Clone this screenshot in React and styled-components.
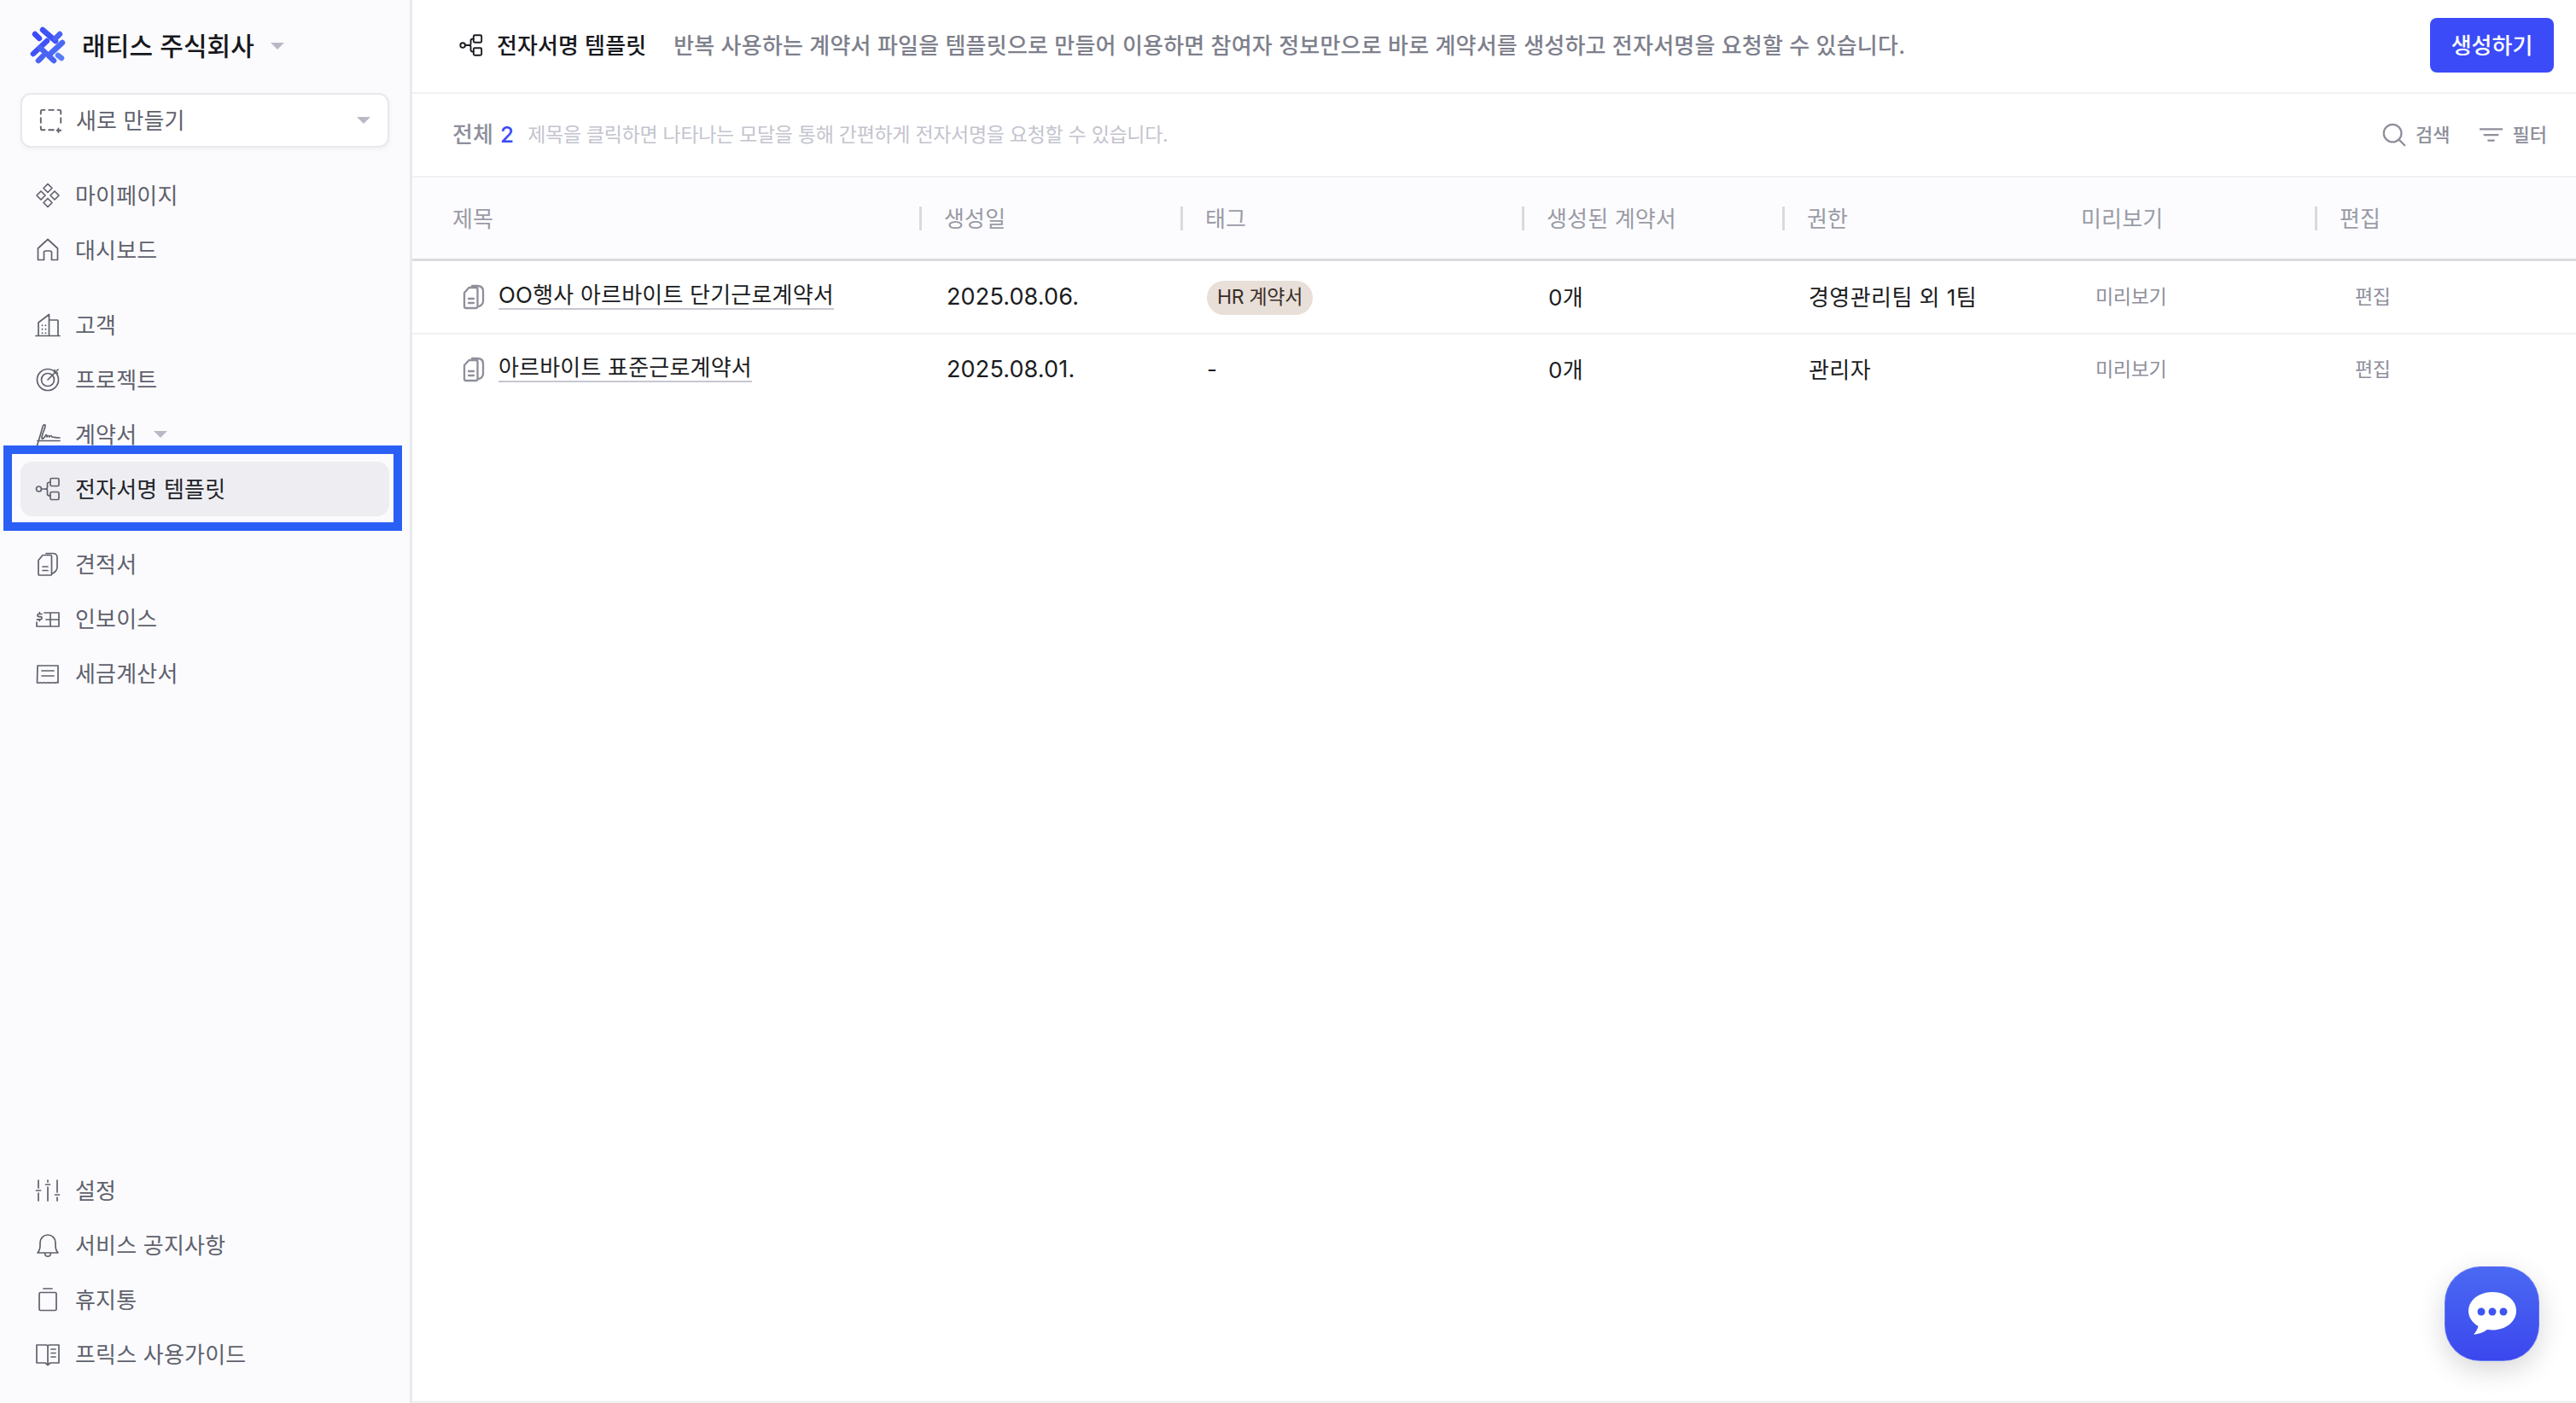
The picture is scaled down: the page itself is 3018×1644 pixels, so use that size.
import React from "react";
import styled, { createGlobalStyle } from "styled-components";

const Global = createGlobalStyle`
  html, body { margin: 0; padding: 0; background: #fff; overflow: hidden; }
  body { font-family: Inter, "Noto Sans CJK KR", sans-serif; color: #1b1c22; }
  * { box-sizing: border-box; }
`;

const Page = styled.div`
  position: relative;
  display: flex;
  width: 3018px;
  height: 1644px;
  overflow: hidden;
`;

const Sidebar = styled.aside`
  width: 483px;
  flex: none;
  height: 100%;
  display: flex;
  flex-direction: column;
  background: #fbfbfd;
  border-right: 3px solid #e9e9ef;
  padding-bottom: 25px;
`;

const Brand = styled.div`
  height: 109px;
  display: flex;
  align-items: center;
  padding: 0 0 2px 30px;
  flex: none;
`;

const BrandName = styled.span`
  margin-left: 14px;
  padding-bottom: 3px;
  font-size: 30px;
  font-weight: 500;
  letter-spacing: 0.1px;
  color: #17181d;
`;

const Caret = styled.i`
  display: block;
  flex: none;
  width: 0;
  height: 0;
  border-left: 8px solid transparent;
  border-right: 8px solid transparent;
  border-top: 8px solid #b9b9c6;
  margin-left: ${(p) => p.$gap || 0}px;
`;

const NewButton = styled.div`
  height: 64px;
  margin: 0 24px 24px;
  display: flex;
  align-items: center;
  padding: 0 20px 0 19px;
  background: #fff;
  border: 2px solid #e8e8ee;
  border-radius: 12px;
  box-shadow: 0 2px 6px rgba(30, 30, 60, 0.05);
  flex: none;
`;

const NewLabel = styled.span`
  flex: 1;
  margin-left: 14px;
  padding-bottom: 3px;
  font-size: 26px;
  letter-spacing: 0.1px;
  color: #5f616d;
`;

const NavGroup = styled.nav`
  display: flex;
  flex-direction: column;
  margin-bottom: ${(p) => p.$gap ?? 24}px;
  margin-top: ${(p) => (p.$bottom ? "auto" : "0")};
`;

const NavItem = styled.div`
  height: 64px;
  margin: 0 24px;
  padding-left: 16px;
  display: flex;
  align-items: center;
  border-radius: 14px;
  background: ${(p) => (p.$active ? "#eeeef2" : "transparent")};
  color: ${(p) => (p.$active ? "#22232a" : "#5f616d")};
  font-size: 26px;
  letter-spacing: 0.2px;
`;

const NavLabel = styled.span`
  margin-left: 16px;
  padding-bottom: 3px;
`;

const Highlight = styled.div`
  position: absolute;
  left: 4px;
  top: 522px;
  width: 467px;
  height: 100px;
  border: 10px solid #2a5ff5;
  pointer-events: none;
`;

const Main = styled.main`
  flex: 1;
  min-width: 0;
  display: flex;
  flex-direction: column;
  background: #fff;
  border-bottom: 2px solid #eeeef2;
`;

const Header = styled.header`
  height: 110px;
  flex: none;
  display: flex;
  align-items: center;
  padding: 0 26px 2px 54px;
  border-bottom: 2px solid #f1f1f3;
`;

const HeaderTitle = styled.h1`
  margin: 0 0 0 15px;
  padding-bottom: 3px;
  font-size: 26px;
  font-weight: 500;
  color: #17181d;
  letter-spacing: 0.1px;
`;

const HeaderDesc = styled.p`
  flex: 1;
  margin: 0 0 0 32px;
  padding-bottom: 3px;
  font-size: 26px;
  font-weight: 500;
  color: #7e808c;
  letter-spacing: 0.22px;
`;

const PrimaryButton = styled.button`
  width: 145px;
  height: 64px;
  padding: 0 0 3px;
  border: 0;
  border-radius: 8px;
  background: #3b4bf8;
  color: #fff;
  font: 500 26px Inter, "Noto Sans CJK KR", sans-serif;
`;

const SubBar = styled.div`
  height: 98px;
  flex: none;
  display: flex;
  align-items: center;
  padding: 0 34px 0 47px;
  border-bottom: 2px solid #f1f1f3;
`;

const Total = styled.span`
  padding-bottom: 5px;
  font-size: 26px;
  font-weight: 500;
  color: #8e8f9b;
  letter-spacing: 0.1px;
`;

const TotalCount = styled.b`
  font-weight: 500;
  color: #3b4bf8;
  margin-left: 8px;
`;

const Hint = styled.span`
  flex: 1;
  margin-left: 16px;
  padding-bottom: 5px;
  font-size: 23px;
  color: #c3c4ce;
  letter-spacing: -0.3px;
`;

const ToolButton = styled.span`
  display: flex;
  align-items: center;
  gap: 10px;
  margin-left: 33px;
  font-size: 22px;
  font-weight: 500;
  color: #8e8f9b;
`;

const ToolLabel = styled.span`
  padding-bottom: 4px;
`;

const COLS = "594px 306px 400px 305px 321px 303px 1fr";

const HeadRow = styled.div`
  height: 98px;
  flex: none;
  display: grid;
  grid-template-columns: ${COLS};
  align-items: start;
  padding-top: 34px;
  background: #fcfcfe;
  border-bottom: 3px solid #dcdcdf;
`;

const HeadCell = styled.div`
  height: 28px;
  display: flex;
  align-items: center;
  padding-left: ${(p) => (p.$first ? 44 : 26)}px;
  padding-bottom: 3px;
  border-left: ${(p) => (p.$plain ? "none" : "3px solid #d9d9de")};
  margin-left: ${(p) => (p.$plain ? 3 : 0)}px;
  font-size: 26px;
  color: #9a9ba6;
  letter-spacing: 0.15px;
`;

const Row = styled.div`
  height: ${(p) => (p.$last ? 82 : 86)}px;
  flex: none;
  display: grid;
  grid-template-columns: ${COLS};
  align-items: center;
  border-bottom: ${(p) => (p.$last ? "none" : "2px solid #f0f0f2")};
`;

const Cell = styled.div`
  padding-left: ${(p) => p.$pad ?? 31}px;
  padding-bottom: ${(p) => (p.$small ? 5 : 4)}px;
  font-size: ${(p) => (p.$small ? 23 : 26)}px;
  color: ${(p) => (p.$muted ? "#8e8f9b" : "#1b1c22")};
  letter-spacing: ${(p) => (p.$small ? -0.3 : 0.45)}px;
`;

const DateCell = styled(Cell)`
  padding-left: 32px;
  padding-bottom: 2px;
  font-size: 27px;
  letter-spacing: 0.14px;
`;

const TagCell = styled(Cell)`
  padding-bottom: 0;
  line-height: 40px;
`;

const TitleCell = styled.div`
  display: flex;
  align-items: center;
  padding-left: 56px;
`;

const TitleLink = styled.span`
  margin-left: 13px;
  font-size: 26px;
  letter-spacing: 0.2px;
  color: #1b1c22;
  border-bottom: 2px solid #c6c7d1;
  line-height: 30px;
  margin-bottom: 2px;
`;

const Tag = styled.span`
  display: inline-flex;
  align-items: center;
  height: 40px;
  padding: 0 12px 2px;
  border-radius: 20px;
  background: #e8dfd9;
  color: #3a2e28;
  font-size: 23px;
  letter-spacing: -0.3px;
`;

const ChatFab = styled.div`
  position: absolute;
  left: 2864px;
  top: 1484px;
  width: 111px;
  height: 111px;
  border-radius: 42px;
  display: flex;
  align-items: center;
  justify-content: center;
  background: linear-gradient(180deg, #4a69f2, #3b47ee);
  border: 1.5px solid rgba(255, 255, 255, 0.16);
  box-shadow: 0 10px 32px rgba(0, 0, 0, 0.16);
`;

const Svg = styled.svg`
  display: block;
  flex: none;
  fill: none;
  stroke: ${(p) => p.$color || "#5f616d"};
  stroke-width: ${(p) => p.$sw || 1.7};
  stroke-linecap: round;
  stroke-linejoin: round;
`;

const Ico = ({ size = 32, color, sw, children }) => (
  <Svg width={size} height={size} viewBox="0 0 32 32" $color={color} $sw={sw}>
    {children}
  </Svg>
);

const icons = {
  my: <><path d="M16 2.500l5 5-5 5-5-5zM8 11l5 5-5 5-5-5zM24 11l5 5-5 5-5-5zM16 19.500l5 5-5 5-5-5z" /></>,
  home: <><path d="M4.500 27.500V14L16 3.500 27.500 14v13.500h-7V19a2 2 0 0 0-2-2h-5a2 2 0 0 0-2 2v8.500z" /></>,
  client: <><path d="M2 28.500h28M5 28.500V13L17.500 3.500v25M17.500 10H27a1 1 0 0 1 1 1v17.500M9.500 16v.5M13.500 16v.5M9.500 20.500v.5M13.500 20.500v.5M9.500 25v.5M13.500 25v.5" /></>,
  project: <><circle cx="16" cy="16" r="12.500" /><circle cx="16" cy="16" r="7.500" /><path d="M16 16L28 4M24 4.500v3.500h3.500" /></>,
  contract: <><path d="M3.500 29C6 21 9 11 10 7c1-3 3-3 3-1 0 4-4 9-4 14 0 2 2 1 4-2 1-2 2-2 2 1 1-2 2-2 3 0 1-2 2-2 3 0 2 0 4 1 9 1M4 23.500h26" /></>,
  template: <><circle cx="5.500" cy="16" r="3" /><rect x="19" y="3.500" width="10" height="9" rx="1.500" /><rect x="19" y="19.500" width="10" height="9" rx="1.500" /><path d="M8.500 16H13c2 0 2.500-1 2.500-2v-4c0-1.500 1-2 3.500-2M13 16c2 0 2.500 1 2.500 2v4c0 1.500 1 2 3.500 2" /></>,
  quote: <><path d="M5 11.500l5-6h9.500a1 1 0 0 1 1 1V28a1 1 0 0 1-1 1H6a1 1 0 0 1-1-1zM14 3.500h8c3 0 5 2 5 5v11c0 3-2 6-6.500 8M10 19h6M10 23.500h6" /></>,
  invoice: <><path d="M12 9h17v16H3v-5M19 9v16M14 17h15M9 10.500H5.500a1.600 1.600 0 0 0 0 3.200h2a1.600 1.600 0 0 1 0 3.200H3.500M6.300 8.500v2M6.300 17v1.500" /></>,
  tax: <><path d="M4 7h24v20c-2-1.500-3 1-4.500 0s-3 1-4.500 0-2 1-3 0-2 1-3.500 0-3 1-4.500 0-2.500 1-4.500 0zM9 13h14M9 19h14" /></>,
  settings: <><path d="M5 4v9M5 19v9M16 4v2M16 12v16M27 4v14M27 24v4M2.500 16h5M13.500 9h5M24.500 21h5" /></>,
  bell: <><path d="M4 25c2-2 3-4 3-9V13a9 9 0 0 1 18 0v3c0 5 1 7 3 9zM12.500 25.500c.5 5 6.500 5 7 0" /></>,
  trash: <><rect x="6" y="7.500" width="20" height="21" rx="1.500" /><path d="M11 3h10" /></>,
  guide: <><path d="M3 5h11a2 2 0 0 1 2 2v20M3 5v21h10l3 2.500 3-2.500h10V5H18a2 2 0 0 0-2 2M20 10h5M20 14.500h5M20 19h5" /></>,
};

const Logo = () => (
  <svg width="52" height="52" viewBox="0 0 52 52" fill="none" strokeLinecap="round" strokeWidth="6.5">
    <path d="M11 12L16 17" stroke="#3b4bf8" />
    <path d="M20 7L35 20" stroke="#3f52f7" />
    <path d="M40 12L35 17" stroke="#4a63f5" />
    <path d="M25 20L9 35" stroke="#3f52f7" />
    <path d="M43 22L29 35" stroke="#4a6af5" />
    <path d="M17 28L33 43" stroke="#4a63f5" />
    <path d="M15 43L20 38" stroke="#4a63f5" />
    <path d="M38 37L42 40" stroke="#5a7cf6" />
  </svg>
);

const DashedPlus = () => (
  <Ico size={30} sw={2}>
    <path d="M8 3H5a2 2 0 0 0-2 2v3M13 3h6M24 3h2a2 2 0 0 1 2 2v3M3 13v6M28 13v6M3 24v2a2 2 0 0 0 2 2h3M13 28h6M25 26v5M23 28.500h5" />
  </Ico>
);

const DocIcon = () => (
  <Ico size={32} color="#8e8f9b" sw={2.3}>
    <path d="M5 11l5.500-6h8a2 2 0 0 1 2 2v20a2 2 0 0 1-2 2H7a2 2 0 0 1-2-2zM14 3h6c5 0 7 2 7 6v12c0 3-2 5-5 6M10 18h6M10 23h6" />
  </Ico>
);

const NavRow = ({ icon, label, active, caret }) => (
  <NavItem $active={active}>
    <Ico>{icons[icon]}</Ico>
    <NavLabel>{label}</NavLabel>
    {caret && <Caret $gap={20} />}
  </NavItem>
);

const rows = [
  { title: "OO행사 아르바이트 단기근로계약서", date: "2025.08.06.", tag: "HR 계약서", count: "0개", perm: "경영관리팀 외 1팀" },
  { title: "아르바이트 표준근로계약서", date: "2025.08.01.", tag: null, count: "0개", perm: "관리자" },
];

export default function App() {
  return (
    <Page>
      <Global />
      <Sidebar>
        <Brand>
          <Logo />
          <BrandName>래티스 주식회사</BrandName>
          <Caret $gap={19} />
        </Brand>
        <NewButton>
          <DashedPlus />
          <NewLabel>새로 만들기</NewLabel>
          <Caret />
        </NewButton>
        <NavGroup>
          <NavRow icon="my" label="마이페이지" />
          <NavRow icon="home" label="대시보드" />
        </NavGroup>
        <NavGroup>
          <NavRow icon="client" label="고객" />
          <NavRow icon="project" label="프로젝트" />
          <NavRow icon="contract" label="계약서" caret />
          <NavRow icon="template" label="전자서명 템플릿" active />
        </NavGroup>
        <NavGroup>
          <NavRow icon="quote" label="견적서" />
          <NavRow icon="invoice" label="인보이스" />
          <NavRow icon="tax" label="세금계산서" />
        </NavGroup>
        <NavGroup $bottom $gap={0}>
          <NavRow icon="settings" label="설정" />
          <NavRow icon="bell" label="서비스 공지사항" />
          <NavRow icon="trash" label="휴지통" />
          <NavRow icon="guide" label="프릭스 사용가이드" />
        </NavGroup>
      </Sidebar>
      <Main>
        <Header>
          <Ico size={30} color="#1b1c22" sw={2}>{icons.template}</Ico>
          <HeaderTitle>전자서명 템플릿</HeaderTitle>
          <HeaderDesc>반복 사용하는 계약서 파일을 템플릿으로 만들어 이용하면 참여자 정보만으로 바로 계약서를 생성하고 전자서명을 요청할 수 있습니다.</HeaderDesc>
          <PrimaryButton>생성하기</PrimaryButton>
        </Header>
        <SubBar>
          <Total>전체<TotalCount>2</TotalCount></Total>
          <Hint>제목을 클릭하면 나타나는 모달을 통해 간편하게 전자서명을 요청할 수 있습니다.</Hint>
          <ToolButton>
            <Ico size={30} color="#8e8f9b" sw={2.4}>
              <circle cx="14" cy="14" r="11" />
              <path d="M22 22l7 7" />
            </Ico>
            <ToolLabel>검색</ToolLabel>
          </ToolButton>
          <ToolButton>
            <Ico size={30} color="#8e8f9b" sw={2.4}>
              <path d="M2 9h27M7 16h17M12 23h7" />
            </Ico>
            <ToolLabel>필터</ToolLabel>
          </ToolButton>
        </SubBar>
        <HeadRow>
          <HeadCell $first $plain>제목</HeadCell>
          <HeadCell>생성일</HeadCell>
          <HeadCell>태그</HeadCell>
          <HeadCell>생성된 계약서</HeadCell>
          <HeadCell>권한</HeadCell>
          <HeadCell $plain>미리보기</HeadCell>
          <HeadCell>편집</HeadCell>
        </HeadRow>
        {rows.map((r, i) => (
          <Row key={r.title} $last={i === rows.length - 1}>
            <TitleCell>
              <DocIcon />
              <TitleLink>{r.title}</TitleLink>
            </TitleCell>
            <DateCell>{r.date}</DateCell>
            <TagCell>{r.tag ? <Tag>{r.tag}</Tag> : "-"}</TagCell>
            <Cell>{r.count}</Cell>
            <Cell>{r.perm}</Cell>
            <Cell $muted $small $pad={46}>미리보기</Cell>
            <Cell $muted $small $pad={47}>편집</Cell>
          </Row>
        ))}
      </Main>
      <Highlight />
      <ChatFab>
        <svg width="58" height="56" viewBox="0 0 58 56">
          <path fill="#fff" d="M29 2C13.500 2 1 11.500 1 24c0 7.500 4.500 14 11.500 18-1 3.500-2.800 7-5.500 9.500 6 0 12-2.500 16-5.500 2 .3 4 .5 6 .5 15.500 0 28-9.500 28-22.500S44.500 2 29 2z" />
          <circle cx="16" cy="25" r="4.500" fill="#3f55f0" />
          <circle cx="29" cy="25" r="4.500" fill="#3f55f0" />
          <circle cx="42" cy="25" r="4.500" fill="#3f55f0" />
        </svg>
      </ChatFab>
    </Page>
  );
}
